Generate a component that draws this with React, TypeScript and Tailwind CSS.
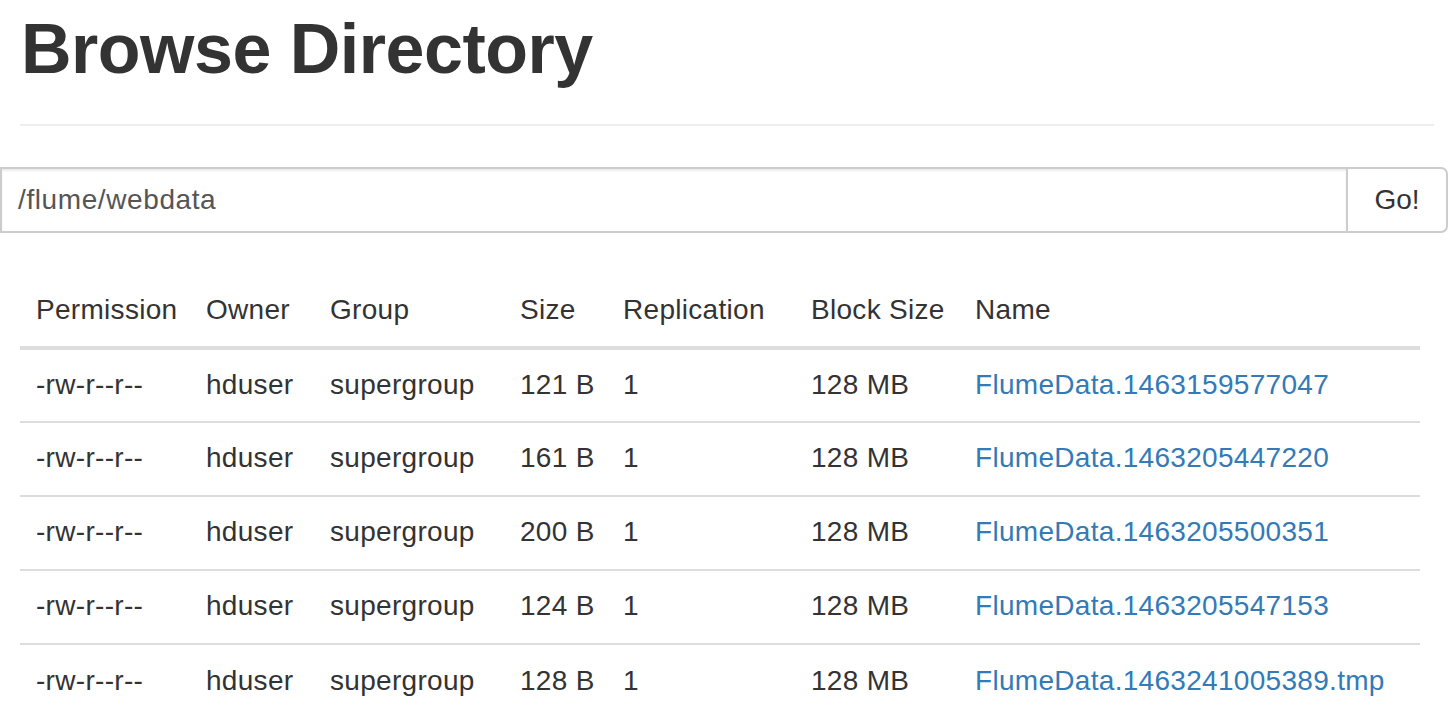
const rows = [
  { size: '121 B', name: 'FlumeData.1463159577047' },
  { size: '161 B', name: 'FlumeData.1463205447220' },
  { size: '200 B', name: 'FlumeData.1463205500351' },
  { size: '124 B', name: 'FlumeData.1463205547153' },
  { size: '128 B', name: 'FlumeData.1463241005389.tmp' },
]

const cols = [
  { label: 'Permission', w: 'w-[170px]' },
  { label: 'Owner', w: 'w-[124px]' },
  { label: 'Group', w: 'w-[190px]' },
  { label: 'Size', w: 'w-[103px]' },
  { label: 'Replication', w: 'w-[188px]' },
  { label: 'Block Size', w: 'w-[164px]' },
  { label: 'Name', w: '' },
]

export default function App() {
  return (
    <div className="min-h-screen bg-white text-[#333] font-['Liberation_Sans',Arial,sans-serif] overflow-hidden">
      <div className="px-[20px]">
        <h1 className="mt-[11px] pl-[1px] text-[70px] leading-[77px] font-bold tracking-[-0.5px] text-[#333]">
          Browse Directory
        </h1>
        <hr className="mt-[36px] border-0 border-t-2 border-[#eee]" />
      </div>

      <div className="mt-[41px] flex w-[1448px]">
        <div className="flex-1 h-[66px] border-2 border-[#ccc] border-r-0 flex items-center pl-[16px] text-[28px] tracking-[0.6px] text-[#555] shadow-[inset_0_2px_2px_rgba(0,0,0,0.075)]">
          /flume/webdata
        </div>
        <button className="w-[102px] h-[66px] border-2 border-[#ccc] rounded-r-[7px] bg-white text-[28px] text-[#333] flex items-center justify-center">
          Go!
        </button>
      </div>

      <div className="px-[20px] mt-[35px]">
        <table className="w-[1400px] table-fixed border-collapse text-[28px] tracking-[0.3px]">
          <thead>
            <tr className="border-b-4 border-[#ddd]">
              {cols.map((c) => (
                <th key={c.label} className={`${c.w} h-[80px] pl-[16px] pt-[5px] text-left font-normal align-middle whitespace-nowrap`}>
                  {c.label}
                </th>
              ))}
            </tr>
          </thead>
          <tbody>
            {rows.map((r, i) => (
              <tr key={r.name} className={i < rows.length - 1 ? 'border-b-2 border-[#ddd]' : ''}>
                <td className="h-[74px] pl-[16px] pb-[2px] whitespace-nowrap">-rw-r--r--</td>
                <td className="pl-[16px] pb-[2px] whitespace-nowrap">hduser</td>
                <td className="pl-[16px] pb-[2px] whitespace-nowrap">supergroup</td>
                <td className="pl-[16px] pb-[2px] whitespace-nowrap">{r.size}</td>
                <td className="pl-[16px] pb-[2px] whitespace-nowrap">1</td>
                <td className="pl-[16px] pb-[2px] whitespace-nowrap">128 MB</td>
                <td className="pl-[16px] pb-[2px] whitespace-nowrap">
                  <a href="#" className="text-[#337ab7]">{r.name}</a>
                </td>
              </tr>
            ))}
          </tbody>
        </table>
      </div>
    </div>
  )
}
